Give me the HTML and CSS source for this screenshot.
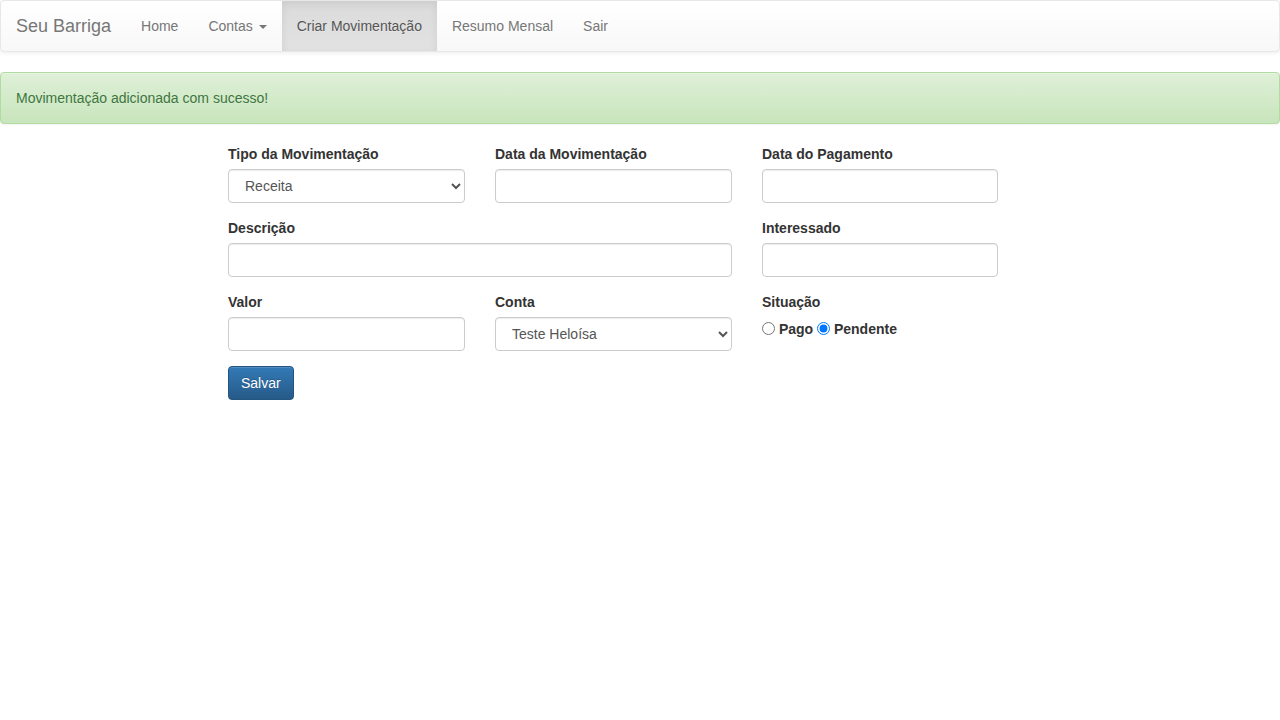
FILE: index.html
```html
<!DOCTYPE html>
<html lang="pt-BR">
<head>
<meta charset="utf-8">
<title>Seu Barriga</title>
<link rel="stylesheet" href="styles.css">
</head>
<body>
<nav class="navbar">
  <div class="navbar-inner">
    <a class="brand" href="#">Seu Barriga</a>
    <ul class="nav">
      <li><a href="#">Home</a></li>
      <li><a href="#">Contas <span class="caret"></span></a></li>
      <li class="active"><a href="#">Criar Movimentação</a></li>
      <li><a href="#">Resumo Mensal</a></li>
      <li><a href="#">Sair</a></li>
    </ul>
  </div>
</nav>

<div class="alert">Movimentação adicionada com sucesso!</div>

<div class="container">
  <form class="form">
    <div class="form-group">
      <label for="tipo">Tipo da Movimentação</label>
      <select id="tipo" class="form-control">
        <option>Receita</option>
        <option>Despesa</option>
      </select>
    </div>
    <div class="form-group">
      <label for="data_transacao">Data da Movimentação</label>
      <input id="data_transacao" class="form-control" type="text">
    </div>
    <div class="form-group">
      <label for="data_pagamento">Data do Pagamento</label>
      <input id="data_pagamento" class="form-control" type="text">
    </div>

    <div class="form-group span-2">
      <label for="descricao">Descrição</label>
      <input id="descricao" class="form-control" type="text">
    </div>
    <div class="form-group">
      <label for="interessado">Interessado</label>
      <input id="interessado" class="form-control" type="text">
    </div>

    <div class="form-group">
      <label for="valor">Valor</label>
      <input id="valor" class="form-control" type="text">
    </div>
    <div class="form-group">
      <label for="conta">Conta</label>
      <select id="conta" class="form-control">
        <option>Teste Heloísa</option>
      </select>
    </div>
    <div class="form-group">
      <label>Situação</label>
      <div class="radios">
        <input type="radio" name="status" id="status_pago"> <label class="radio-label" for="status_pago">Pago</label>
        <input type="radio" name="status" id="status_pendente" checked> <label class="radio-label" for="status_pendente">Pendente</label>
      </div>
    </div>

    <div class="actions">
      <button type="submit" class="btn-primary">Salvar</button>
    </div>
  </form>
</div>
</body>
</html>
```

FILE: styles.css
```css
* {
  box-sizing: border-box;
}

html, body {
  margin: 0;
  padding: 0;
}

body {
  font-family: "Liberation Sans", Arial, Helvetica, sans-serif;
  font-size: 14px;
  line-height: 1.42857143;
  color: #333;
  background: #fff;
}

a {
  text-decoration: none;
}

/* Navbar */
.navbar {
  min-height: 50px;
  margin-bottom: 20px;
  border: 1px solid #e7e7e7;
  border-radius: 4px;
  background-color: #f8f8f8;
  background-image: linear-gradient(to bottom, #fff 0, #f8f8f8 100%);
  box-shadow: inset 0 1px 0 rgba(255, 255, 255, .15), 0 1px 5px rgba(0, 0, 0, .075);
}

.navbar-inner {
  display: flex;
  align-items: stretch;
  padding: 0 15px;
}

.brand {
  display: block;
  height: 50px;
  padding: 15px 15px;
  margin-left: -15px;
  font-size: 18px;
  line-height: 20px;
  color: #777;
  text-shadow: 0 1px 0 rgba(255, 255, 255, .25);
}

.nav {
  display: flex;
  list-style: none;
  margin: 0;
  padding: 0;
}

.nav li a {
  display: block;
  padding: 15px 15px;
  line-height: 20px;
  color: #777;
  text-shadow: 0 1px 0 rgba(255, 255, 255, .25);
}

.nav li.active a {
  color: #555;
  background-image: linear-gradient(to bottom, #dbdbdb 0, #e2e2e2 100%);
  box-shadow: inset 0 3px 9px rgba(0, 0, 0, .075);
}

.caret {
  display: inline-block;
  width: 0;
  height: 0;
  margin-left: 2px;
  vertical-align: middle;
  border-top: 4px solid;
  border-right: 4px solid transparent;
  border-left: 4px solid transparent;
}

/* Alert */
.alert {
  padding: 15px;
  margin-bottom: 20px;
  border: 1px solid #b2dba1;
  border-radius: 4px;
  color: #3c763d;
  background-color: #dff0d8;
  background-image: linear-gradient(to bottom, #dff0d8 0, #c8e5bc 100%);
  text-shadow: 0 1px 0 rgba(255, 255, 255, .2);
  box-shadow: inset 0 1px 0 rgba(255, 255, 255, .25), 0 1px 2px rgba(0, 0, 0, .05);
}

/* Form */
.container {
  width: 970px;
  margin: 0 auto;
  padding-left: 73px;
}

.form {
  display: grid;
  grid-template-columns: 237px 237px 236px;
  column-gap: 30px;
}

.form-group {
  margin-bottom: 15px;
}

.span-2 {
  grid-column: span 2;
}

.form-group > label {
  display: inline-block;
  max-width: 100%;
  margin-bottom: 5px;
  font-weight: bold;
}

.form-control {
  display: block;
  width: 100%;
  height: 34px;
  padding: 6px 12px;
  font-family: inherit;
  font-size: 14px;
  line-height: 1.42857143;
  color: #555;
  background-color: #fff;
  border: 1px solid #ccc;
  border-radius: 4px;
  box-shadow: inset 0 1px 1px rgba(0, 0, 0, .075);
}

.radios {
  line-height: 20px;
  padding-top: 2px;
}

.radios input[type="radio"] {
  margin: 3px 0 0;
  vertical-align: top;
}

.radio-label {
  font-weight: bold;
}

.actions {
  grid-column: 1 / -1;
}

.btn-primary {
  display: inline-block;
  padding: 6px 12px;
  font-family: inherit;
  font-size: 14px;
  line-height: 1.42857143;
  color: #fff;
  border: 1px solid #245580;
  border-radius: 4px;
  background-color: #265a88;
  background-image: linear-gradient(to bottom, #337ab7 0, #265a88 100%);
  text-shadow: 0 -1px 0 rgba(0, 0, 0, .2);
  box-shadow: inset 0 1px 0 rgba(255, 255, 255, .15), 0 1px 1px rgba(0, 0, 0, .075);
  cursor: pointer;
}
```
